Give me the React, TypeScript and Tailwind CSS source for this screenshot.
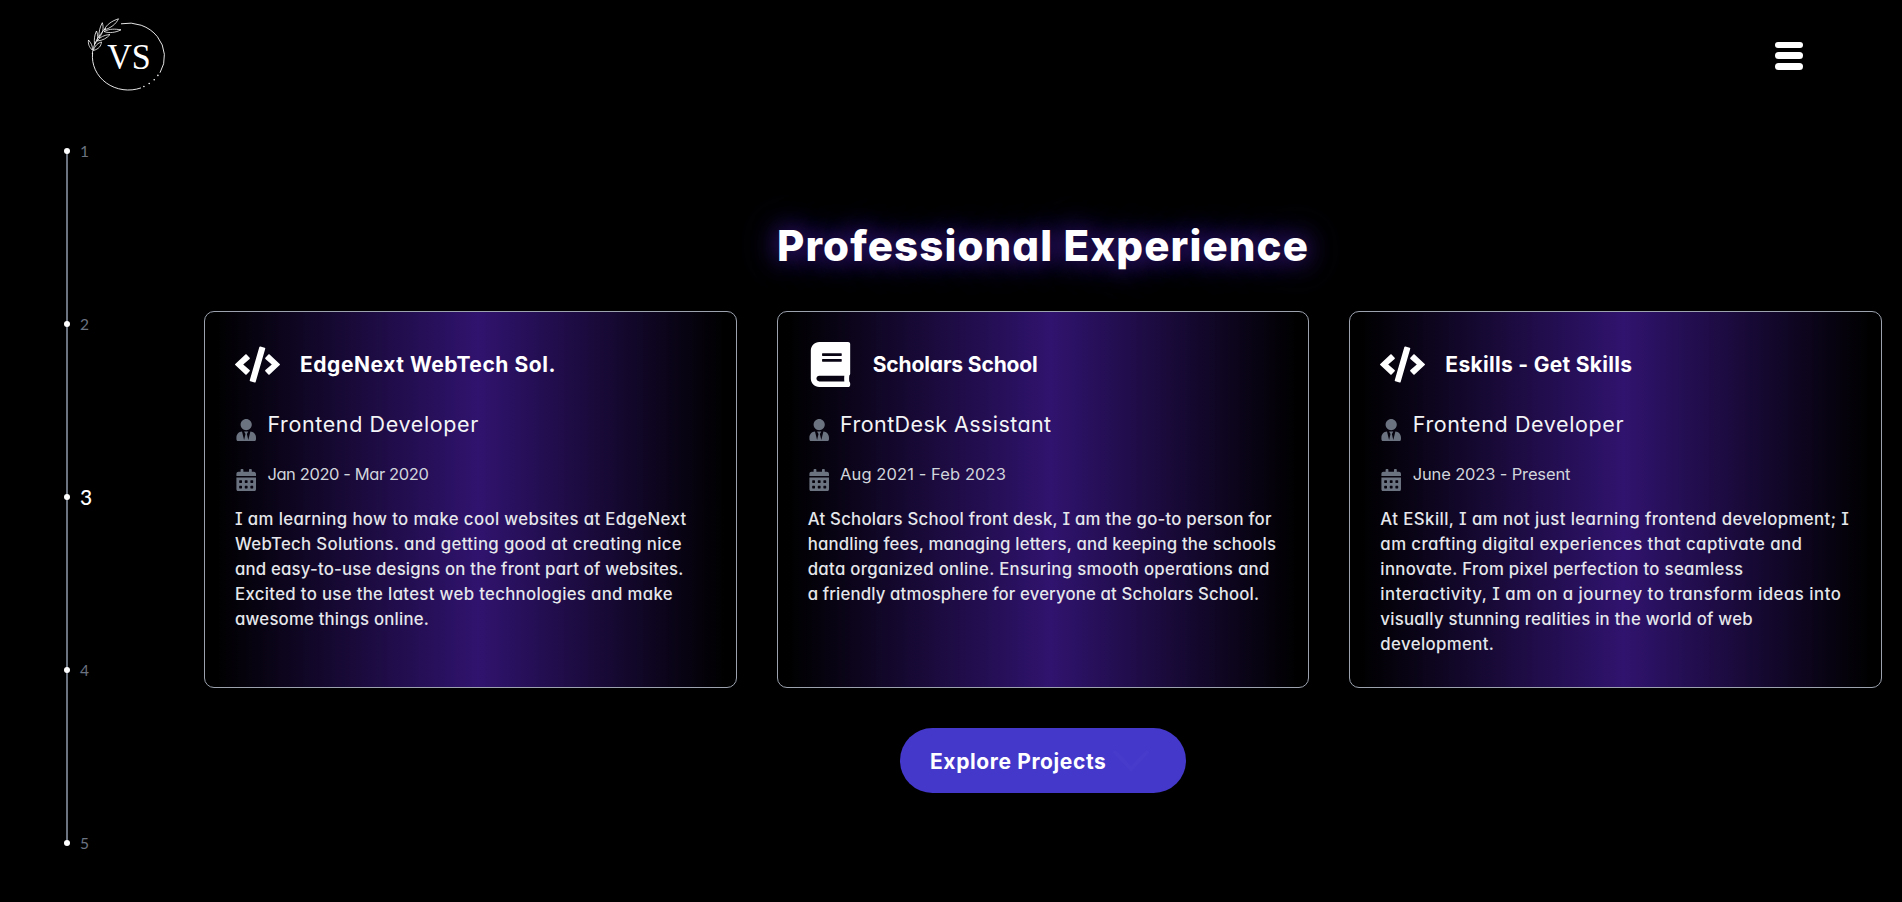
import { useLayoutEffect, useRef, useState } from "react";
import type { ReactNode } from "react";
import { FaBook, FaCalendarAlt, FaCode, FaUserTie } from "react-icons/fa";

/** A single line of text whose tracking is adjusted to fill the given width. */
function Line({ text, width, className = "" }: { text: string; width: number; className?: string }) {
  const ref = useRef<HTMLSpanElement>(null);
  const [tracking, setTracking] = useState(0);
  useLayoutEffect(() => {
    const natural = ref.current?.getBoundingClientRect().width ?? width;
    setTracking((width - natural) / text.length);
  }, [text, width]);
  return (
    <span className={`block whitespace-nowrap ${className}`}>
      <span ref={ref} style={{ letterSpacing: `${tracking}px` }}>
        {text}
      </span>
    </span>
  );
}

type Entry = {
  icon: ReactNode;
  company: [string, number];
  role: [string, number];
  dates: [string, number];
  lines: [string, number][];
};

const entries: Entry[] = [
  {
    icon: <FaCode size={45} />,
    company: ["EdgeNext WebTech Sol.", 256],
    role: ["Frontend Developer", 211.5],
    dates: ["Jan 2020 - Mar 2020", 161],
    lines: [
      ["I am learning how to make cool websites at EdgeNext", 451.5],
      ["WebTech Solutions. and getting good at creating nice", 447],
      ["and easy-to-use designs on the front part of websites.", 448.5],
      ["Excited to use the latest web technologies and make", 438],
      ["awesome things online.", 194],
    ],
  },
  {
    icon: <FaBook size={45} />,
    company: ["Scholars School", 165],
    role: ["FrontDesk Assistant", 211.5],
    dates: ["Aug 2021 - Feb 2023", 166],
    lines: [
      ["At Scholars School front desk, I am the go-to person for", 464],
      ["handling fees, managing letters, and keeping the schools", 468.5],
      ["data organized online. Ensuring smooth operations and", 462],
      ["a friendly atmosphere for everyone at Scholars School.", 451.5],
    ],
  },
  {
    icon: <FaCode size={45} />,
    company: ["Eskills - Get Skills", 187],
    role: ["Frontend Developer", 211.5],
    dates: ["June 2023 - Present", 157.5],
    lines: [
      ["At ESkill, I am not just learning frontend development; I", 469],
      ["am crafting digital experiences that captivate and", 422],
      ["innovate. From pixel perfection to seamless", 363],
      ["interactivity, I am on a journey to transform ideas into", 461],
      ["visually stunning realities in the world of web", 372.5],
      ["development.", 114],
    ],
  },
];

function Logo() {
  return (
    <svg width="84" height="80" viewBox="84 14 84 80" fill="none" stroke="#fff" strokeWidth="0.9">
      <path d="M92.6 53 A36 33.5 0 0 0 141 87.9" />
      <path d="M121 23.8 A36 33.5 0 0 1 160 72.7" />
      <g fill="#fff" stroke="none">
        <circle cx="143.9" cy="86.5" r="0.8" />
        <circle cx="149.2" cy="83.5" r="0.8" />
        <circle cx="154.2" cy="79.8" r="0.8" />
        <circle cx="157.9" cy="75.4" r="0.8" />
      </g>
      <g strokeWidth="0.8">
        <path d="M92.3 54 C93 45 98 36 106 28" />
        <path d="M92.3 50 C89 47 88 44 88.5 40 C91 43 93 46 92.3 50Z" />
        <path d="M94.5 44.5 C94 39 94.5 35 96.5 31 C98.5 36 98 40 94.5 44.5Z" />
        <path d="M99 38 C98.5 32 100 27 102.3 22.7 C104 28 103 33 99 38Z" />
        <path d="M104 30 C107 24 112 21 118.5 18.8 C116 24 111 28 104 30Z" />
        <path d="M104 31.5 C110 28.5 115 29 121 29.8 C116 32.5 109 33.5 104 31.5Z" />
        <path d="M97 41 C100 37 104 35 110 34.5 C107 38 103 40.5 97 41Z" />
        <path d="M93.3 50.5 C95 45.5 98 43 101.5 42 C101 46 99 49 93.3 50.5Z" />
      </g>
      <text
        x="107.2"
        y="69.2"
        fill="#fff"
        stroke="none"
        fontSize="36"
        textLength="43.5"
        lengthAdjust="spacingAndGlyphs"
        className="font-['Liberation_Serif',serif]"
      >
        VS
      </text>
    </svg>
  );
}

function Timeline() {
  return (
    <nav className="flex w-[100px] shrink-0 flex-col pt-[148px] pl-[64px]">
      {[1, 2, 3, 4, 5].map((n) => (
        <div key={n} className={n === 5 ? "flex h-[6px]" : "flex h-[173px]"}>
          <div className="relative flex w-[6px] shrink-0 justify-center">
            {n < 5 && <span className="mt-[3px] h-[173px] w-[2px] bg-[#6b7280]" />}
            <span className="absolute top-0 left-0 size-[5.5px] rounded-full bg-white" />
          </div>
          <span
            className={
              n === 3
                ? "ml-[10px] h-5 -translate-y-[7px] font-['Lato',sans-serif] text-[21px] leading-5 font-medium text-white"
                : "ml-[10px] h-5 -translate-y-[7px] font-['Lato',sans-serif] text-[15.5px] leading-5 text-[#6b7280]"
            }
          >
            {n}
          </span>
        </div>
      ))}
    </nav>
  );
}

function Card({ entry }: { entry: Entry }) {
  return (
    <article className="h-[377px] min-w-0 flex-1 basis-0 rounded-[10px] border border-[#9ca3af] bg-[linear-gradient(to_right,#000_2%,#30136e_51.5%,#000_98%)] p-[30px]">
      <header className="flex h-[45px] items-center gap-5 text-white">
        <span className="size-[45px] shrink-0">{entry.icon}</span>
        <Line text={entry.company[0]} width={entry.company[1]} className="text-[21px] leading-8 font-bold" />
      </header>
      <div className="mt-[26px] flex h-[40px] gap-[10px]">
        <FaUserTie className="mt-[6px] size-[22.4px] shrink-0 text-[#6b7280]" />
        <Line text={entry.role[0]} width={entry.role[1]} className="-mt-px text-[21.5px] leading-6 text-gray-100" />
      </div>
      <div className="mt-[10px] flex h-[44px] gap-[10px]">
        <FaCalendarAlt className="mt-[6px] size-[22.4px] shrink-0 text-[#6b7280]" />
        <Line text={entry.dates[0]} width={entry.dates[1]} className="-mt-px text-[16.5px] leading-6 text-gray-300" />
      </div>
      <p className="text-[16.75px] leading-[25px] font-[450] text-gray-200">
        {entry.lines.map(([text, width]) => (
          <Line key={text} text={text} width={width} />
        ))}
      </p>
    </article>
  );
}

export default function App() {
  return (
    <div className="flex h-[902px] w-[1902px] flex-col overflow-hidden bg-black font-['Inter',sans-serif] [font-feature-settings:'cv08','cv11']">
      <header className="-mb-[94px] flex h-[94px] items-start justify-between pt-[14px] pr-[99px] pl-[84px]">
        <Logo />
        <button aria-label="Menu" className="mt-[27.5px] flex w-[28.5px] flex-col gap-1">
          <span className="h-[6.75px] rounded-full bg-white" />
          <span className="h-[6.75px] rounded-full bg-white" />
          <span className="h-[6.75px] rounded-full bg-white" />
        </button>
      </header>
      <div className="flex flex-1">
        <Timeline />
        <main className="flex min-w-0 flex-1 flex-col items-center pt-[216px] pr-5 pl-[104px]">
          <h2 className="h-[95px] text-[42px] leading-[60px] font-extrabold text-white [text-shadow:0_0_24px_#4320a0,0_0_44px_#2e1569]">
            <Line text="Professional Experience" width={532} />
          </h2>
          <section className="flex w-full gap-10">
            {entries.map((entry, i) => (
              <Card key={i} entry={entry} />
            ))}
          </section>
          <button className="mt-10 flex h-[65px] w-[286px] items-center rounded-full bg-[#4338ca] pl-[30px] text-[21px] font-bold text-white">
            <Line text="Explore Projects" width={176.5} className="pt-[2px]" />
            <svg className="ml-[5px]" width="38" height="24" viewBox="0 0 38 24" fill="none" stroke="#463bcb" strokeWidth="4">
              <path d="M2 2 L19 20 L36 2" />
            </svg>
          </button>
        </main>
      </div>
    </div>
  );
}
